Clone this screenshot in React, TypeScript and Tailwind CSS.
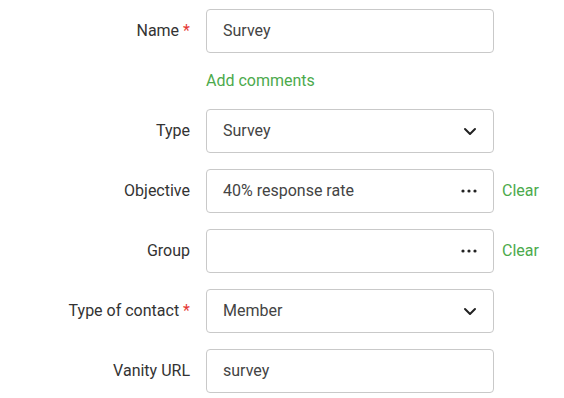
import React from "react";

const Chevron = () => (
  <svg width="14" height="14" viewBox="0 0 14 14" fill="none">
    <path d="M2 5 L7 10 L12 5" stroke="#222" strokeWidth="2" strokeLinecap="round" strokeLinejoin="round" />
  </svg>
);

const Dots = () => (
  <svg width="16" height="6" viewBox="0 0 16 6">
    <circle cx="2" cy="3" r="1.6" fill="#222" />
    <circle cx="8" cy="3" r="1.6" fill="#222" />
    <circle cx="14" cy="3" r="1.6" fill="#222" />
  </svg>
);

function Row({ label, required, children, extra }: { label: string; required?: boolean; children: React.ReactNode; extra?: React.ReactNode }) {
  return (
    <div className="flex items-center h-[44px]">
      <div className="w-[190px] text-right text-[16px] text-[#333] shrink-0">
        {label}
        {required && <span className="text-[#e53935] ml-[4px]">*</span>}
      </div>
      <div className="ml-[16px] w-[288px] h-[44px] border border-[#c9c9c9] rounded-[4px] bg-white flex items-center pl-[16px] pr-[16px] text-[16px] text-[#444]">
        <span className="flex-1">{children}</span>
        {extra}
      </div>
    </div>
  );
}

export default function App() {
  return (
    <div className="w-[564px] h-[398px] bg-white pt-[9px]" style={{ fontFamily: "Roboto, 'Liberation Sans', sans-serif" }}>
      <div className="flex flex-col">
        <Row label="Name" required>Survey</Row>
        <div className="h-[56px] flex items-center pl-[206px] text-[16px] text-[#4caa4c]">Add comments</div>
        <div className="flex flex-col gap-[16px]">
          <Row label="Type" extra={<Chevron />}>Survey</Row>
          <div className="flex items-center">
            <Row label="Objective" extra={<Dots />}>40% response rate</Row>
            <span className="ml-[8px] text-[16px] text-[#4caa4c]">Clear</span>
          </div>
          <div className="flex items-center">
            <Row label="Group" extra={<Dots />}>{""}</Row>
            <span className="ml-[8px] text-[16px] text-[#4caa4c]">Clear</span>
          </div>
          <Row label="Type of contact" required extra={<Chevron />}>Member</Row>
          <Row label="Vanity URL">survey</Row>
        </div>
      </div>
    </div>
  );
}
